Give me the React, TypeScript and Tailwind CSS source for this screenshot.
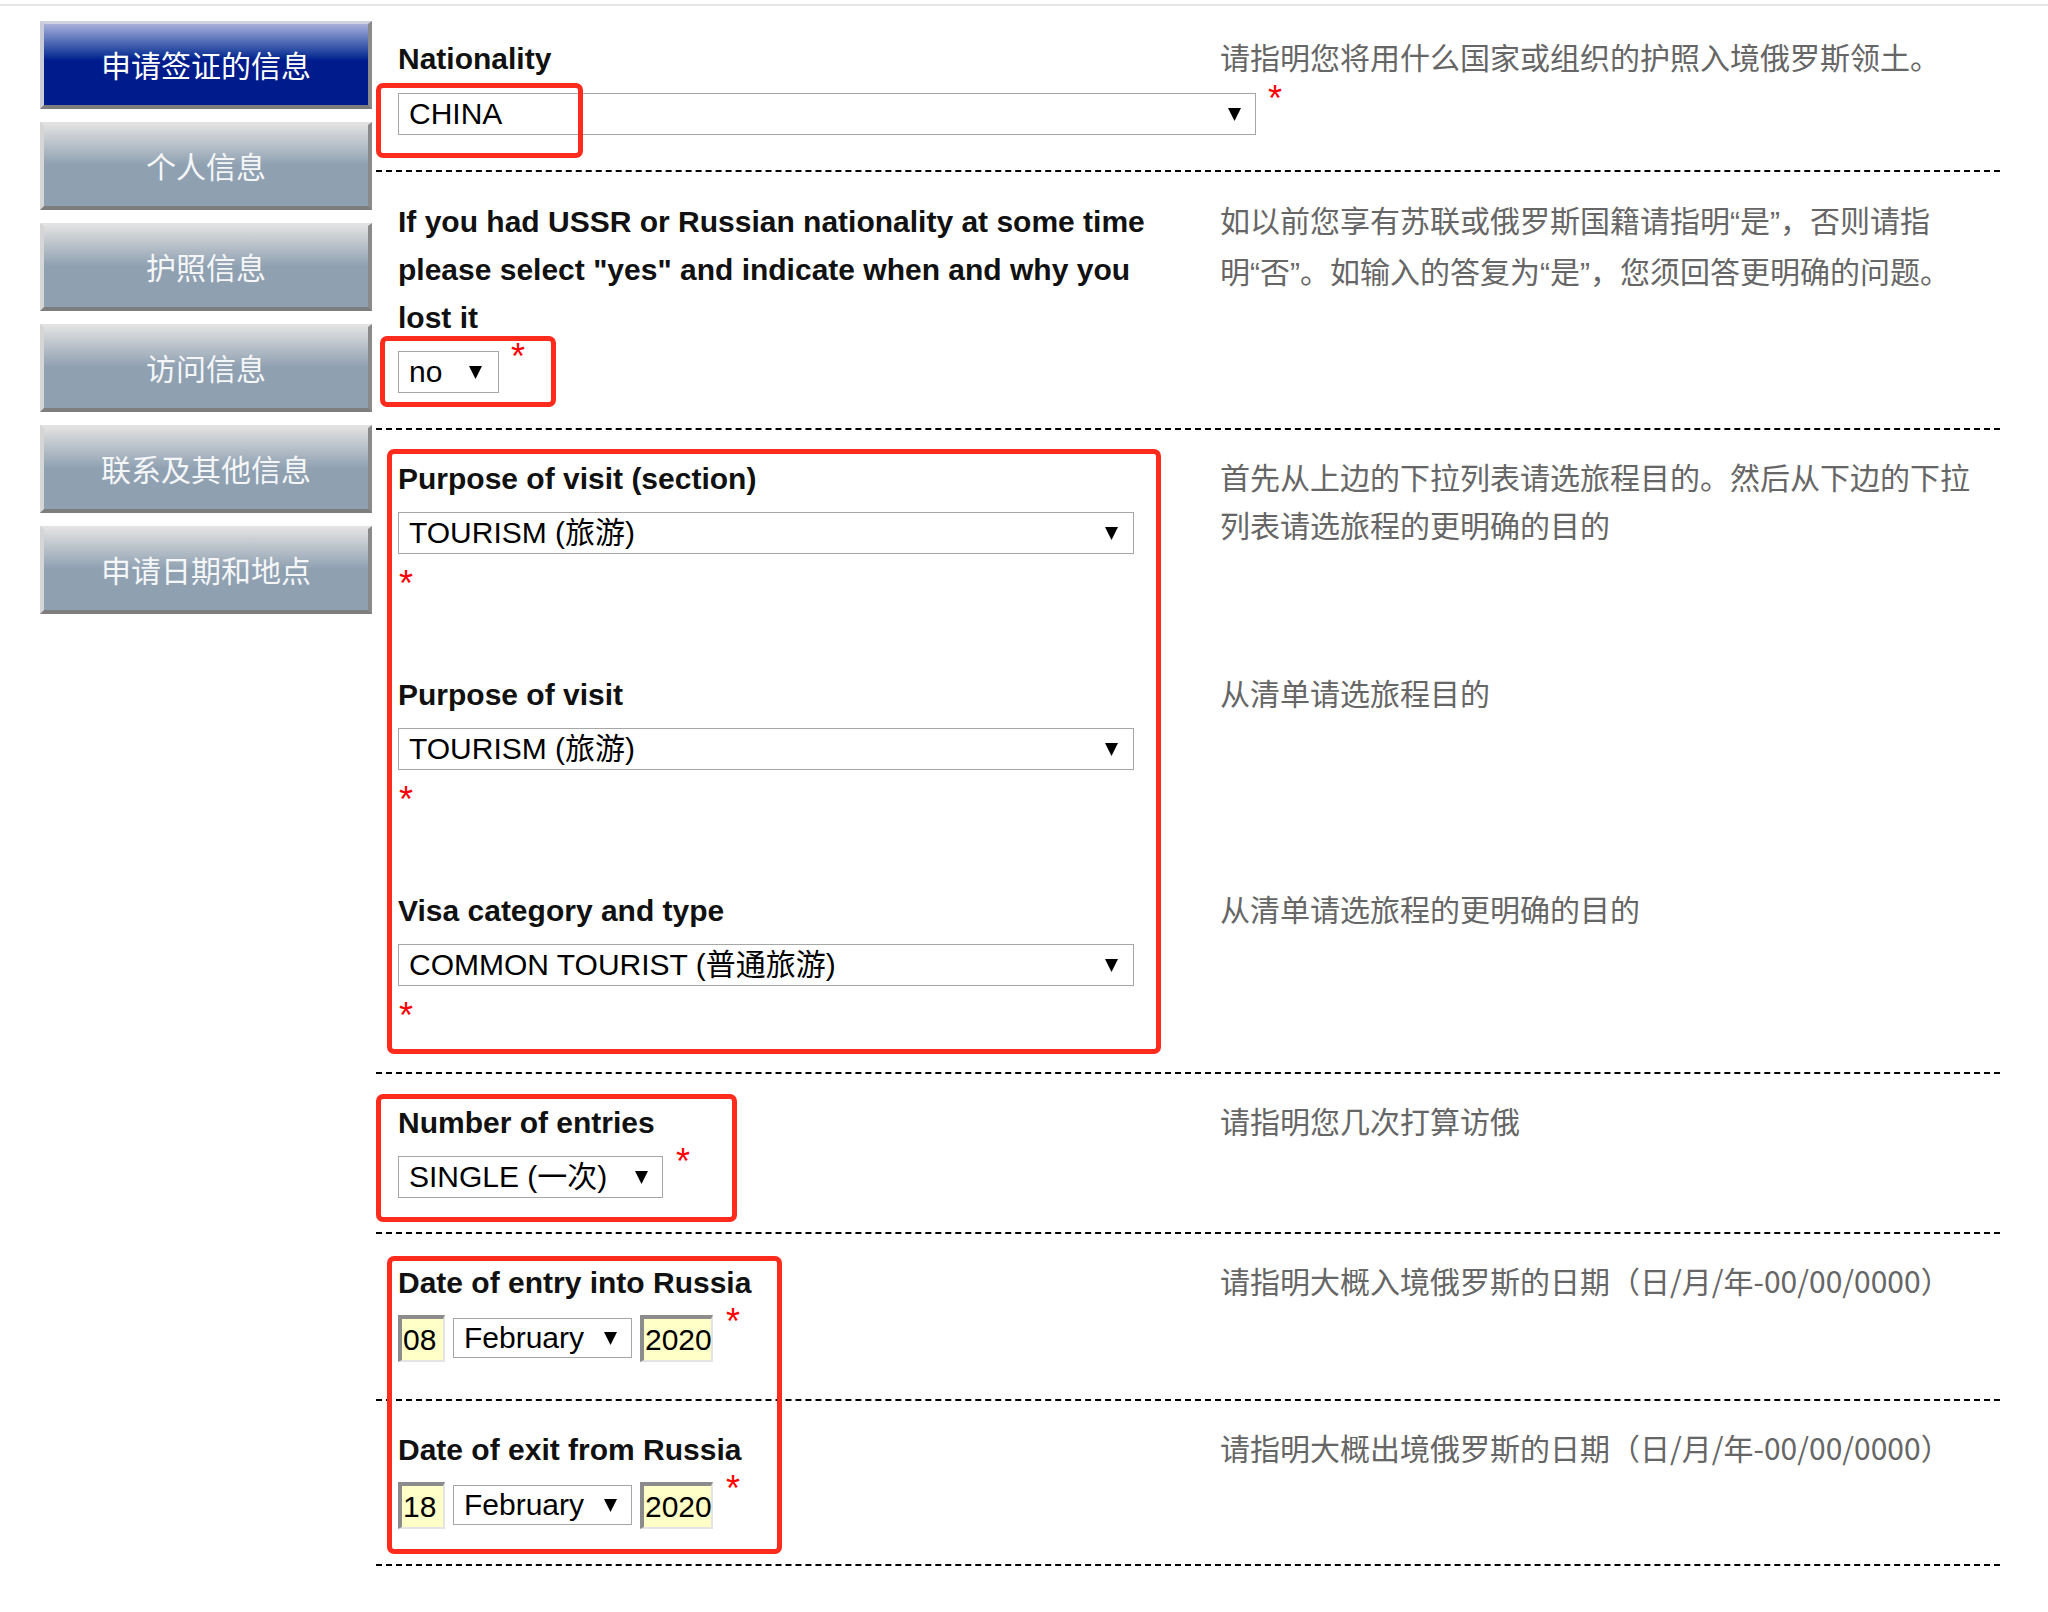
import React from "react";

const menu = ["申请签证的信息", "个人信息", "护照信息", "访问信息", "联系及其他信息", "申请日期和地点"];

function Arrow() {
  return (
    <svg width="13" height="13" viewBox="0 0 13 13" className="shrink-0">
      <polygon points="0,0 13,0 6.5,13" fill="#000" />
    </svg>
  );
}

function Select({ value, className }: { value: string; className: string }) {
  return (
    <div className={"flex items-center justify-between border border-[#a6a6a6] bg-white pl-[10px] text-[30px] leading-none text-black " + className}>
      <span className="whitespace-nowrap">{value}</span>
      <Arrow />
    </div>
  );
}

function Star({ className }: { className: string }) {
  return <span className={"text-[36px] leading-none text-[#ff0000] " + className}>*</span>;
}

// latin quote marks, narrow like the original page
function Q({ children }: { children: React.ReactNode }) {
  return <span className="font-['Liberation_Sans',sans-serif]">{children}</span>;
}

function DateBox({ value, className }: { value: string; className: string }) {
  return (
    <div className={"h-[47px] border-t-[4px] border-l-[4px] border-r-[2px] border-b-[2px] border-t-[#8c8c8c] border-l-[#8c8c8c] border-r-[#e4e4e4] border-b-[#e4e4e4] bg-[#ffffc8] pl-[1px] text-[30px] leading-[41px] text-black " + className}>
      {value}
    </div>
  );
}

function Desc({ children }: { children: React.ReactNode }) {
  return <div className="-mt-[3px] w-[780px] whitespace-nowrap font-['Noto_Sans_CJK_SC',sans-serif] text-[30px] leading-[48px] text-[#666666]">{children}</div>;
}

function Label({ children }: { children: React.ReactNode }) {
  return <div className="text-[30px] font-bold leading-[48px] text-[#111111]">{children}</div>;
}

function DateRow({ label, day, desc, className }: { label: string; day: string; desc: string; className: string }) {
  return (
    <div className={"flex border-b-2 border-dashed border-black pl-[22px] pt-[25px] " + className}>
      <div className="w-[822px]">
        <Label>{label}</Label>
        <div className="mt-[8px] flex items-start">
          <DateBox value={day} className="w-[47px]" />
          <Select value="February" className="ml-[8px] mt-[3px] h-[40px] w-[179px] pr-[14px]" />
          <DateBox value="2020" className="ml-[8px] w-[73px]" />
          <Star className="ml-[13px] -mt-[11px]" />
        </div>
      </div>
      <Desc>{desc}</Desc>
    </div>
  );
}

export default function App() {
  return (
    <div className="min-h-screen bg-white font-['Liberation_Sans','Noto_Sans_CJK_SC',sans-serif]">
      <div className="mt-[4px] h-[2px] bg-[#e6e6e6]" />
      <div className="flex">
        {/* left menu */}
        <nav className="ml-[40px] mt-[15px] flex w-[332px] flex-col gap-[13px]">
          {menu.map((m, i) =>
            i === 0 ? (
              <div key={m} className="flex h-[88px] items-center justify-center border-t-[3px] border-l-[4px] border-r-[4px] border-b-[4px] border-t-[#cfd1dc] border-l-[#c9cbd6] border-r-[#8a8a8a] border-b-[#7d7d7d] bg-linear-to-b from-[#a9b0da] via-[#001c8c] via-45% to-[#001c8c] font-['Noto_Sans_CJK_SC',sans-serif] text-[30px] text-white">
                {m}
              </div>
            ) : (
              <div key={m} className="flex h-[88px] items-center justify-center border-t-[3px] border-l-[4px] border-r-[4px] border-b-[4px] border-t-[#e2e2e2] border-l-[#d6d6d6] border-r-[#8a8a8a] border-b-[#7d7d7d] bg-linear-to-b from-[#e0e0e0] via-[#8fa0b1] via-50% to-[#8fa0b1] font-['Noto_Sans_CJK_SC',sans-serif] text-[30px] text-[#f4f6f8]">
                {m}
              </div>
            )
          )}
        </nav>

        <main className="ml-[4px] w-[1624px]">
          {/* Nationality */}
          <div className="relative flex border-b-2 border-dashed border-black pb-[35px] pl-[22px] pt-[29px]">
            <div className="w-[822px]">
              <Label>Nationality</Label>
              <div className="mt-[10px] flex items-start">
                <Select value="CHINA" className="h-[42px] w-[858px] shrink-0 pr-[14px]" />
                <Star className="ml-[12px] -mt-[12px]" />
              </div>
            </div>
            <Desc>请指明您将用什么国家或组织的护照入境俄罗斯领土。</Desc>
            <div className="pointer-events-none absolute left-0 top-[77px] h-[75px] w-[207px] rounded-[7px] border-[5px] border-[#ff2b1c]" />
          </div>

          {/* USSR */}
          <div className="relative flex border-b-2 border-dashed border-black pb-[35px] pl-[22px] pt-[26px]">
            <div className="w-[822px]">
              <div className="w-[770px]">
                <Label>If you had USSR or Russian nationality at some time please select "yes" and indicate when and why you lost it</Label>
              </div>
              <div className="mt-[9px] flex items-start">
                <Select value="no" className="h-[42px] w-[101px] pr-[16px]" />
                <Star className="ml-[12px] -mt-[12px]" />
              </div>
            </div>
            <Desc>
              如以前您享有苏联或俄罗斯国籍请指明<Q>“</Q>是<Q>”</Q>，否则请指
              <br />
              明<Q>“</Q>否<Q>”</Q>。如输入的答复为<Q>“</Q>是<Q>”</Q>，您须回答更明确的问题。
            </Desc>
            <div className="pointer-events-none absolute left-[4px] top-[164px] h-[71px] w-[176px] rounded-[7px] border-[5px] border-[#ff2b1c]" />
          </div>

          {/* Purpose */}
          <div className="relative flex flex-col gap-[65px] border-b-2 border-dashed border-black pb-[34px] pl-[22px] pt-[25px]">
            {[
              { l: "Purpose of visit (section)", v: "TOURISM (旅游)", d: ["首先从上边的下拉列表请选旅程目的。然后从下边的下拉", "列表请选旅程的更明确的目的"] },
              { l: "Purpose of visit", v: "TOURISM (旅游)", d: ["从清单请选旅程目的"] },
              { l: "Visa category and type", v: "COMMON TOURIST (普通旅游)", d: ["从清单请选旅程的更明确的目的"] },
            ].map((it) => (
              <div key={it.l} className="flex">
                <div className="w-[822px]">
                  <Label>{it.l}</Label>
                  <Select value={it.v} className="mt-[9px] h-[42px] w-[736px] pr-[15px]" />
                  <div className="mt-[12px] h-[40px] pl-[1px]">
                    <Star className="" />
                  </div>
                </div>
                <Desc>
                  {it.d.map((t, i) => (
                    <div key={i}>{t}</div>
                  ))}
                </Desc>
              </div>
            ))}
            <div className="pointer-events-none absolute left-[11px] top-[19px] h-[605px] w-[774px] rounded-[7px] border-[5px] border-[#ff2b1c]" />
          </div>

          {/* Entries */}
          <div className="relative flex border-b-2 border-dashed border-black pb-[34px] pl-[22px] pt-[25px]">
            <div className="w-[822px]">
              <Label>Number of entries</Label>
              <div className="mt-[9px] flex items-start">
                <Select value="SINGLE (一次)" className="h-[42px] w-[265px] pr-[14px]" />
                <Star className="ml-[13px] -mt-[12px]" />
              </div>
            </div>
            <Desc>请指明您几次打算访俄</Desc>
            <div className="pointer-events-none absolute left-0 top-[20px] h-[128px] w-[361px] rounded-[7px] border-[5px] border-[#ff2b1c]" />
          </div>

          {/* Dates */}
          <div className="relative">
            <DateRow label="Date of entry into Russia" day="08" desc="请指明大概入境俄罗斯的日期（日/月/年-00/00/0000）" className="pb-[37px]" />
            <DateRow label="Date of exit from Russia" day="18" desc="请指明大概出境俄罗斯的日期（日/月/年-00/00/0000）" className="pb-[35px]" />
            <div className="pointer-events-none absolute left-[11px] top-[22px] h-[298px] w-[395px] rounded-[7px] border-[5px] border-[#ff2b1c]" />
          </div>
        </main>
      </div>
    </div>
  );
}
